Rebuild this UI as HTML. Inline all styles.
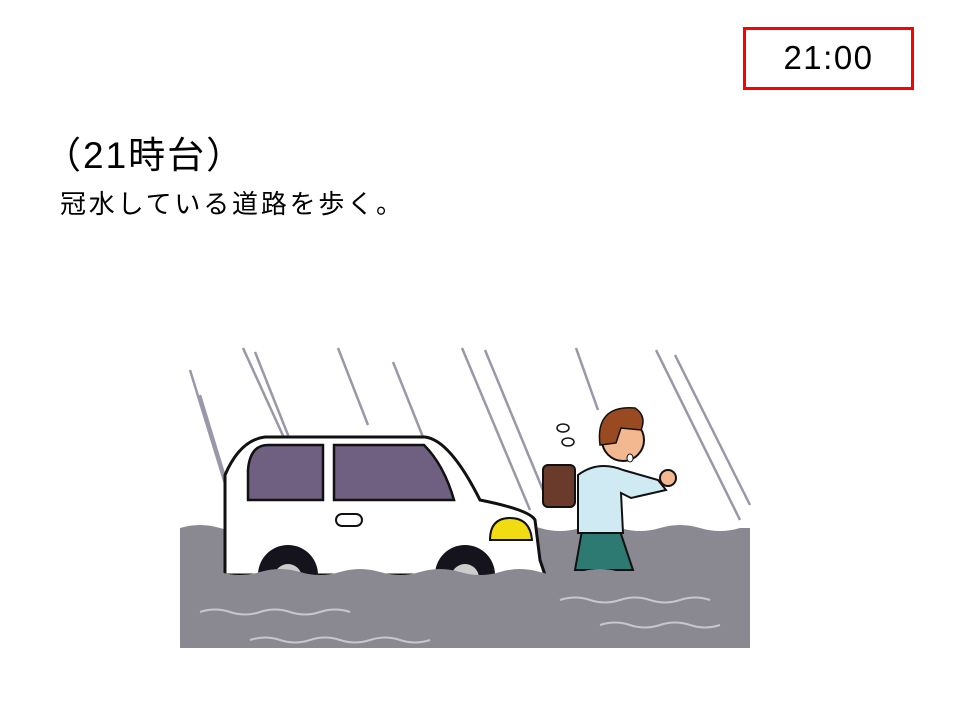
<!DOCTYPE html>
<html><head><meta charset="utf-8"><style>
body{margin:0;width:960px;height:720px;background:#fff;position:relative;overflow:hidden;font-family:"Liberation Sans","Noto Sans CJK JP",sans-serif;color:#000}
.t{position:absolute;white-space:nowrap}
</style></head><body>
<div style="position:absolute;left:743px;top:27px;width:165px;height:57px;border:3px solid #f00"></div>
<div class="t" style="left:743px;top:39px;width:171px;text-align:center;font-size:33px;letter-spacing:1.5px">21:00</div>
<div class="t" style="left:44px;top:125px;font-size:37px;letter-spacing:2px">（21時台）</div>
<div class="t" style="left:60px;top:184px;font-size:26px;letter-spacing:2.8px">冠水している道路を歩く。</div>
<svg style="position:absolute;left:0;top:0" width="960" height="720">
<g stroke="#9a98a8" stroke-width="2.5" fill="none">
<line x1="200" y1="395" x2="235" y2="510"/><line x1="190" y1="370" x2="230" y2="500"/>
<line x1="243" y1="348" x2="285" y2="440"/><line x1="255" y1="352" x2="292" y2="445"/>
<line x1="338" y1="348" x2="368" y2="425"/><line x1="393" y1="362" x2="425" y2="442"/>
<line x1="462" y1="348" x2="530" y2="510"/><line x1="485" y1="350" x2="545" y2="495"/>
<line x1="576" y1="348" x2="598" y2="410"/><line x1="656" y1="350" x2="740" y2="520"/>
<line x1="675" y1="355" x2="750" y2="505"/>
</g>
<path d="M180 528 q20 -6 40 0 t40 0 t40 0 t40 0 t40 0 t40 0 t40 0 t40 0 t40 0 t40 0 t40 0 t40 0 t40 0 t40 0 L750 528 L750 648 L180 648Z" fill="#8a8890"/>
<path d="M225 552 L225 475 Q240 440 265 437 L425 437 Q450 440 480 500 Q530 510 535 520 L540 560 L545 575 L225 575Z" fill="#fff" stroke="#111" stroke-width="3"/>
<path d="M248 470 q2 -25 20 -25 h55 v55 h-75z" fill="#6f5f80" stroke="#111" stroke-width="2.5"/>
<path d="M334 445 h90 q20 20 30 55 h-120z" fill="#6f5f80" stroke="#111" stroke-width="2.5"/>
<rect x="336" y="514" width="26" height="12" rx="6" fill="#fff" stroke="#111" stroke-width="2"/>
<path d="M490 540 q0 -22 20 -22 q20 0 22 22z" fill="#f0dc10" stroke="#111" stroke-width="2"/>
<circle cx="288" cy="575" r="30" fill="#15131c"/><circle cx="288" cy="578" r="14" fill="#ccc"/>
<circle cx="465" cy="575" r="30" fill="#15131c"/><circle cx="465" cy="578" r="14" fill="#ccc"/>
<path d="M575 570 l8 -45 h35 l15 45z" fill="#2d7a72" stroke="#111" stroke-width="2"/>
<path d="M180 572 q20 -6 40 0 t40 0 t40 0 t40 0 t40 0 t40 0 t40 0 t40 0 t40 0 t40 0 t40 0 t40 0 t40 0 t40 0 L750 572 L750 648 L180 648Z" fill="#8a8890"/>
<g stroke="#c8c6cc" stroke-width="2" fill="none">
<path d="M200 612 q15 -5 30 0 t30 0 t30 0 t30 0 t30 0"/><path d="M250 640 q15 -5 30 0 t30 0 t30 0 t30 0 t30 0 t30 0"/>
<path d="M560 600 q15 -5 30 0 t30 0 t30 0 t30 0 t30 0"/><path d="M600 625 q15 -5 30 0 t30 0 t30 0 t30 0"/>
</g>
<rect x="543" y="465" width="32" height="42" rx="5" fill="#6a3a2a" stroke="#111" stroke-width="2"/>
<path d="M578 475 q20 -15 45 -5 l35 10 l8 10 l-35 8 l-10 -5 l2 40 h-45z" fill="#cfeaf2" stroke="#111" stroke-width="2"/>
<circle cx="668" cy="478" r="8" fill="#f4b890" stroke="#111" stroke-width="2"/>
<circle cx="623" cy="440" r="21" fill="#f4b890" stroke="#111" stroke-width="2"/>
<path d="M600 445 q-5 -40 35 -37 q12 8 6 22 l-20 -2 l-5 15z" fill="#9a4a20" stroke="#111" stroke-width="1.5"/>
<ellipse cx="630" cy="458" rx="3" ry="4" fill="#fff" stroke="#111"/>
<g fill="#fff" stroke="#111" stroke-width="1.5"><ellipse cx="563" cy="428" rx="6" ry="4"/><ellipse cx="568" cy="442" rx="6" ry="4"/></g>
</svg>
</body></html>
